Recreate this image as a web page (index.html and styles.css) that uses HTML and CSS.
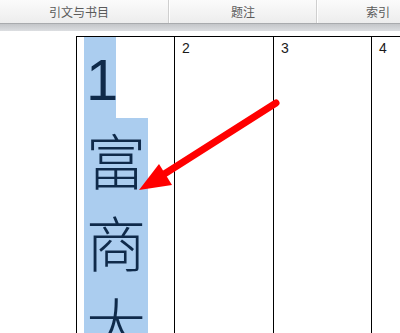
FILE: index.html
```
<!DOCTYPE html>
<html>
<head>
<meta charset="utf-8">
<link rel="stylesheet" href="styles.css">
</head>
<body>
<div class="toolbar">
  <div class="tab tab-cite">引文与书目</div>
  <div class="tab tab-caption">题注</div>
  <div class="tab tab-index">索引</div>
</div>
<div class="band"></div>
<div class="doc">
  <div class="grid">
    <div class="cell first">
      <div class="hl num">1</div>
      <div class="hl han">富</div>
      <div class="hl han">商</div>
      <div class="hl han">大</div>
    </div>
    <div class="cell">2</div>
    <div class="cell">3</div>
    <div class="cell">4</div>
  </div>
</div>
<svg class="arrow" width="400" height="333" viewBox="0 0 400 333">
  <line x1="276" y1="103" x2="158" y2="178" stroke="#ff0000" stroke-width="7" stroke-linecap="round"/>
  <polygon points="139,190 159,164 172,185" fill="#ff0000"/>
</svg>
</body>
</html>
```
FILE: styles.css
```
html, body {
  margin: 0;
  padding: 0;
  background: #ffffff;
  overflow: hidden;
}
body {
  width: 400px;
  height: 333px;
  position: relative;
  font-family: "Noto Sans CJK SC", "Liberation Sans", sans-serif;
}
.toolbar {
  display: flex;
  height: 24px;
  background: linear-gradient(#fbfbfb, #ededed);
  border-bottom: 1px solid #a9abae;
  box-sizing: border-box;
}
.tab {
  height: 100%;
  box-sizing: border-box;
  font-size: 12px;
  line-height: 23px;
  color: #5a5a5a;
  white-space: nowrap;
}
.tab-cite {
  width: 169px;
  text-align: center;
  padding-right: 10px;
  border-right: 1px solid #cfcfcf;
}
.tab-caption {
  width: 148px;
  text-align: center;
  border-left: 1px solid #ffffff;
  border-right: 1px solid #cfcfcf;
}
.tab-index {
  flex: 1;
  border-left: 1px solid #ffffff;
  padding-left: 48px;
}
.band {
  height: 7px;
  background: linear-gradient(#c4c6c9, #dcdee1);
}
.doc {
  padding: 5px 0 0 76px;
}
.grid {
  display: grid;
  grid-template-columns: 98px 99px 98px 98px;
  border-left: 1px solid #000;
  border-top: 1px solid #000;
  height: 330px;
}
.cell {
  border-right: 1px solid #000;
  padding: 4px 0 0 7px;
  font-family: "Liberation Sans", sans-serif;
  font-size: 14px;
  line-height: 15px;
  color: #1a1a1a;
}
.cell.first {
  padding: 0 0 0 7px;
  display: flex;
  flex-direction: column;
  align-items: flex-start;
}
.hl {
  background: #abcdef;
  color: #0f2a4a;
}
.num {
  width: 32px;
  height: 81px;
  font-family: "Liberation Sans", sans-serif;
  font-size: 58px;
  line-height: 85px;
  text-indent: 2px;
}
.han {
  width: 64px;
  height: 82px;
  font-family: "Noto Sans CJK SC", sans-serif;
  font-weight: 300;
  font-size: 60px;
  line-height: 82px;
  text-align: center;
}
.arrow {
  position: absolute;
  left: 0;
  top: 0;
}
```
